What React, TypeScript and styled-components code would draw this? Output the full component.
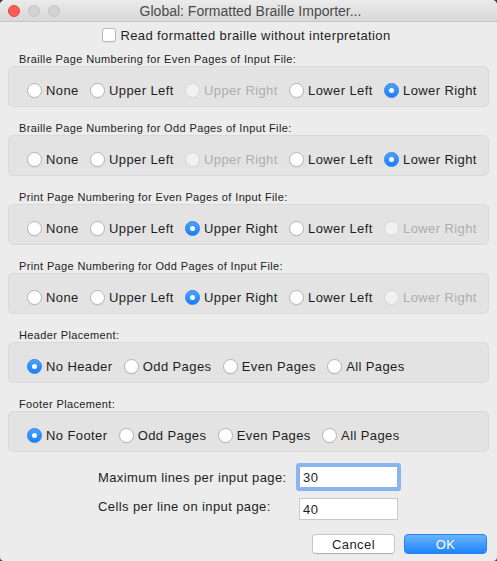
import styled, { createGlobalStyle, css } from 'styled-components'

const GlobalStyle = createGlobalStyle`
  html, body { margin: 0; padding: 0; background: #3a3a3a; }
  * { box-sizing: border-box; }
`

const FONT = `'Liberation Sans', Arial, sans-serif`

const Window = styled.div`
  width: 497px;
  height: 561px;
  background: #ececec;
  border-radius: 5px 5px 4px 4px;
  overflow: hidden;
  font-family: ${FONT};
  color: #1e1e1e;
  display: flex;
  flex-direction: column;
`

const TitleBar = styled.div`
  height: 22px;
  flex-shrink: 0;
  display: grid;
  grid-template-columns: 1fr auto 1fr;
  align-items: center;
  background: linear-gradient(#ebebeb, #d8d8d8);
  border-bottom: 1px solid #c6c6c6;
  padding: 0 8px;
`

const Lights = styled.div`
  display: flex;
  gap: 8px;
`

const Light = styled.span<{ $close?: boolean }>`
  width: 12px;
  height: 12px;
  border-radius: 50%;
  ${({ $close }) =>
    $close
      ? css`background: #fc5b57; border: 1px solid #e2463f;`
      : css`background: #d3d3d3; border: 1px solid #c4c4c4;`}
`

const Title = styled.div`
  font-size: 14px;
  color: #4a4a4a;
  padding-left: 4px;
`

const Content = styled.div`
  flex: 1;
  display: flex;
  flex-direction: column;
  padding: 6px 8px 0;
`

const CheckRow = styled.label`
  display: flex;
  align-items: center;
  justify-content: center;
  gap: 4px;
  height: 14px;
  font-size: 13px;
  letter-spacing: 0.4px;
  margin-bottom: 11px;
  padding-right: 4px;
`

const CheckBox = styled.span`
  width: 14px;
  height: 14px;
  border-radius: 3px;
  background: #fff;
  border: 1px solid #b8b8b8;
  box-shadow: 0 1px 0 rgba(0, 0, 0, 0.05);
`

const Groups = styled.div`
  display: flex;
  flex-direction: column;
  gap: 15px;
`

const GroupLabel = styled.div`
  font-size: 11px;
  letter-spacing: 0.37px;
  line-height: 13px;
  padding-left: 11px;
  color: #222;
`

const GroupBox = styled.div`
  height: 41px;
  background: #e3e3e3;
  border: 1px solid #dadada;
  border-radius: 5px;
  padding: 15px 0 0 18px;
  display: flex;
  align-items: flex-start;
  overflow: hidden;
`

const Option = styled.span<{ $disabled?: boolean }>`
  display: flex;
  align-items: center;
  flex-shrink: 0;
  white-space: nowrap;
  gap: 4px;
  height: 16px;
  margin-right: 11.3px;
  font-size: 13px;
  letter-spacing: 0.4px;
  color: ${({ $disabled }) => ($disabled ? '#aeaeae' : '#1e1e1e')};
`

const Radio = styled.span<{ $checked?: boolean; $disabled?: boolean }>`
  width: 15px;
  height: 15px;
  border-radius: 50%;
  position: relative;
  flex-shrink: 0;
  ${({ $checked, $disabled }) =>
    $checked
      ? css`
          background: linear-gradient(#4aa3fb, #1b7ef6);
          border: 1px solid #2a83ef;
          &::after {
            content: '';
            position: absolute;
            left: 4px;
            top: 4px;
            width: 5px;
            height: 5px;
            border-radius: 50%;
            background: #fff;
          }
        `
      : $disabled
        ? css`background: #f1f1f1; border: 1px solid #d6d6d6;`
        : css`
            background: #fff;
            border: 1px solid #b4b4b4;
            box-shadow: 0 1px 0 rgba(0, 0, 0, 0.04);
          `}
`

const Fields = styled.div`
  display: grid;
  grid-template-columns: 201px 99px;
  row-gap: 10px;
  align-items: center;
  margin: 14px 0 0 90px;
`

const FieldLabel = styled.span<{ $raise?: boolean }>`
  font-size: 13px;
  letter-spacing: 0.4px;
  margin-top: ${({ $raise }) => ($raise ? '-5px' : '0')};
`

const TextField = styled.div<{ $focused?: boolean }>`
  height: 22px;
  background: #fff;
  border: 1px solid #c9c9c9;
  font-size: 13px;
  letter-spacing: 0.4px;
  padding: 1px 0 0 3px;
  display: flex;
  align-items: center;
  ${({ $focused }) =>
    $focused &&
    css`
      border-color: #8bb3ea;
      box-shadow: 0 0 0 3px #88b4f0;
      border-radius: 1px;
    `}
`

const Buttons = styled.div`
  display: flex;
  justify-content: flex-end;
  gap: 9px;
  margin-top: 14px;
  padding-right: 2px;
`

const Button = styled.div<{ $primary?: boolean }>`
  width: 83px;
  height: 20px;
  border-radius: 4px;
  font-size: 13px;
  letter-spacing: 0.4px;
  display: flex;
  align-items: center;
  justify-content: center;
  ${({ $primary }) =>
    $primary
      ? css`
          background: linear-gradient(#6ab5fb, #1f84fb);
          border: 1px solid #2a82ee;
          color: #fff;
        `
      : css`
          background: #fff;
          border: 1px solid #c6c6c6;
          border-bottom-color: #b0b0b0;
          color: #1e1e1e;
        `}
`

type Opt = { label: string; checked?: boolean; disabled?: boolean }

const positions = (checked: string, disabled: string): Opt[] =>
  ['None', 'Upper Left', 'Upper Right', 'Lower Left', 'Lower Right'].map((label) => ({
    label,
    checked: label === checked,
    disabled: label === disabled,
  }))

const placements = (first: string): Opt[] => [
  { label: first, checked: true },
  { label: 'Odd Pages' },
  { label: 'Even Pages' },
  { label: 'All Pages' },
]

const groups: { title: string; options: Opt[] }[] = [
  { title: 'Braille Page Numbering for Even Pages of Input File:', options: positions('Lower Right', 'Upper Right') },
  { title: 'Braille Page Numbering for Odd Pages of Input File:', options: positions('Lower Right', 'Upper Right') },
  { title: 'Print Page Numbering for Even Pages of Input File:', options: positions('Upper Right', 'Lower Right') },
  { title: 'Print Page Numbering for Odd Pages of Input File:', options: positions('Upper Right', 'Lower Right') },
  { title: 'Header Placement:', options: placements('No Header') },
  { title: 'Footer Placement:', options: placements('No Footer') },
]

export default function App() {
  return (
    <>
      <GlobalStyle />
      <Window>
        <TitleBar>
          <Lights>
            <Light $close />
            <Light />
            <Light />
          </Lights>
          <Title>Global: Formatted Braille Importer...</Title>
          <span />
        </TitleBar>
        <Content>
          <CheckRow>
            <CheckBox />
            Read formatted braille without interpretation
          </CheckRow>
          <Groups>
            {groups.map((g) => (
              <div key={g.title}>
                <GroupLabel>{g.title}</GroupLabel>
                <GroupBox>
                  {g.options.map((o) => (
                    <Option key={o.label} $disabled={o.disabled}>
                      <Radio $checked={o.checked} $disabled={o.disabled} />
                      {o.label}
                    </Option>
                  ))}
                </GroupBox>
              </div>
            ))}
          </Groups>
          <Fields>
            <FieldLabel>Maximum lines per input page:</FieldLabel>
            <TextField $focused>30</TextField>
            <FieldLabel $raise>Cells per line on input page:</FieldLabel>
            <TextField>40</TextField>
          </Fields>
          <Buttons>
            <Button>Cancel</Button>
            <Button $primary>OK</Button>
          </Buttons>
        </Content>
      </Window>
    </>
  )
}
